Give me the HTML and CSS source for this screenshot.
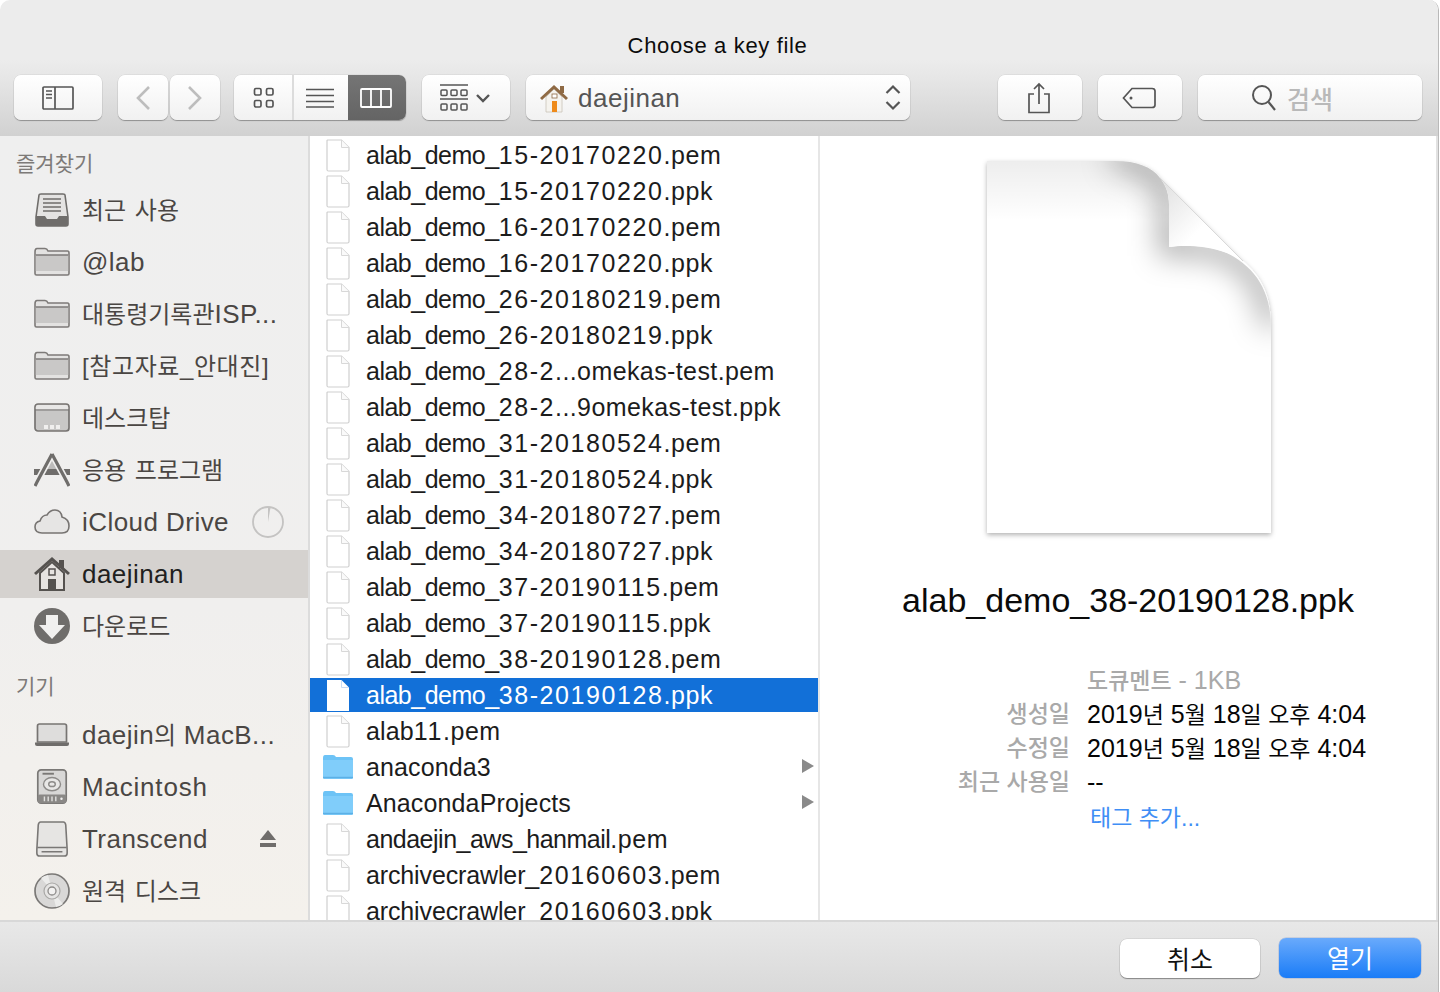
FILE: index.html
```html
<!DOCTYPE html>
<html lang="ko">
<head>
<meta charset="utf-8">
<title>Choose a key file</title>
<link rel="stylesheet" href="styles.css">
</head>
<body>
<svg class="sprite" xmlns="http://www.w3.org/2000/svg">
  <symbol id="doc" viewBox="0 0 24 33"><path d="M1.5 1H15.500L23 8.500V30.500Q23 32 21.500 32H2.500Q1 32 1 30.500V1.500Z" fill="#fff" stroke="#cfcfcf" stroke-width="1.200"/><path d="M15.500 1V8.500H23" fill="#fafafa" stroke="#d8d8d8" stroke-width="1"/></symbol>
  <symbol id="docw" viewBox="0 0 24 33"><path d="M1 1H15.500L23 8.500V32H1Z" fill="#fff"/><path d="M15.500 1V8.500H23" fill="none" stroke="#c9dcf5" stroke-width="1"/></symbol>
  <symbol id="bluefolder" viewBox="0 0 32 26"><path d="M1 4Q1 1 3 1H11Q13 1 14 3H29Q31 3 31 5V23Q31 25 29 25H3Q1 25 1 23Z" fill="#6dc3f6"/><path d="M1 6H31V23Q31 25 29 25H3Q1 25 1 23Z" fill="#80cdfa"/><path d="M1 23.500H31" stroke="#5cb0e6" stroke-width="1.500"/></symbol>
  <symbol id="sfolder" viewBox="0 0 36 30"><path d="M1 5Q1 1.500 3 1.500H11Q13 1.500 14 4H33.500Q35 4 35 6V26.500Q35 28 33.500 28H2.500Q1 28 1 26.500Z" fill="#e3e2e1" stroke="#7d7a78" stroke-width="1.600"/><path d="M1.800 8H34.200V24H1.800Z" fill="#c9c8c7"/><path d="M1.800 8H34.200" stroke="#7d7a78" stroke-width="1.400"/></symbol>
</svg>
<div class="window">
  <header class="titlebar"><span class="title">Choose a key file</span></header>
  <nav class="toolbar">
    <div class="btn b-side"><svg class="ic" width="32" height="24" viewBox="0 0 32 24"><rect x="1" y="1" width="30" height="22" rx="1" fill="none" stroke="#555" stroke-width="1.700"/><path d="M13 1V23M4 5H10M4 8.500H10M4 12H10" stroke="#555" stroke-width="1.700" fill="none"/></svg></div>
    <div class="navpair">
      <div class="btn b-nav"><svg class="ic" width="16" height="26" viewBox="0 0 16 26"><path d="M14 2L3 13L14 24" fill="none" stroke="#bdbdbd" stroke-width="2.600"/></svg></div>
      <div class="btn b-nav"><svg class="ic" width="16" height="26" viewBox="0 0 16 26"><path d="M2 2L13 13L2 24" fill="none" stroke="#bdbdbd" stroke-width="2.600"/></svg></div>
    </div>
    <div class="seg">
      <div class="seg-i s1"><svg class="ic" width="22" height="22" viewBox="0 0 22 22"><g fill="none" stroke="#555" stroke-width="1.700"><rect x="1.500" y="1.500" width="6.500" height="6.500" rx="1.500"/><rect x="13.500" y="1.500" width="6.500" height="6.500" rx="1.500"/><rect x="1.500" y="13.500" width="6.500" height="6.500" rx="1.500"/><rect x="13.500" y="13.500" width="6.500" height="6.500" rx="1.500"/></g></svg></div>
      <div class="seg-i s2"><svg class="ic" width="28" height="20" viewBox="0 0 28 20"><path d="M0 1.500H28M0 7.500H28M0 13.500H28M0 19H28" stroke="#555" stroke-width="1.600"/></svg></div>
      <div class="seg-i s3"><svg class="ic" width="32" height="20" viewBox="0 0 32 20"><rect x="1" y="1" width="30" height="18" rx="1" fill="none" stroke="#fff" stroke-width="1.800"/><path d="M11 1V19M21 1V19" stroke="#fff" stroke-width="1.800"/></svg></div>
    </div>
    <div class="btn b-arr">
      <svg class="ic" width="28" height="27" viewBox="0 0 28 27"><path d="M0 1H28M0 15H28" stroke="#555" stroke-width="1.600"/><g fill="none" stroke="#555" stroke-width="1.500"><rect x="1" y="6" width="6" height="5.500" rx="1"/><rect x="11" y="6" width="6" height="5.500" rx="1"/><rect x="21" y="6" width="6" height="5.500" rx="1"/><rect x="1" y="20" width="6" height="6" rx="1"/><rect x="11" y="20" width="6" height="6" rx="1"/><rect x="21" y="20" width="6" height="6" rx="1"/></g></svg>
      <svg class="ic" width="14" height="10" viewBox="0 0 14 10"><path d="M1 2L7 8L13 2" fill="none" stroke="#555" stroke-width="2.400"/></svg>
    </div>
    <div class="btn b-path">
      <svg class="ic" width="30" height="30" viewBox="0 0 30 30"><path d="M7 14V29H23V14L15 6Z" fill="#f5f3ee" stroke="#c9c3b8" stroke-width=".8"/><path d="M1 15L15 2L29 15L27 17L15 6L3 17Z" fill="#8f6a44"/><rect x="21" y="3" width="4" height="7" fill="#8f6a44"/><rect x="13" y="18" width="5" height="11" fill="#ee8a1a"/><rect x="13" y="11" width="5" height="4" fill="#fff" stroke="#8f6a44" stroke-width=".8"/></svg>
      <span class="path-label">daejinan</span>
      <svg class="ic" width="16" height="27" viewBox="0 0 16 27"><path d="M1.500 9L8 2.500L14.500 9M1.500 18L8 24.500L14.500 18" fill="none" stroke="#555" stroke-width="2.200"/></svg>
    </div>
    <div class="btn b-share"><svg class="ic" width="24" height="32" viewBox="0 0 24 32"><path d="M7 12H2V30.500H22V12H17" fill="none" stroke="#555" stroke-width="1.700"/><path d="M12 22V2M7 7L12 2L17 7" fill="none" stroke="#555" stroke-width="1.700"/></svg></div>
    <div class="btn b-tag"><svg class="ic" width="34" height="22" viewBox="0 0 34 22"><path d="M10 1.500H30Q33 1.500 33 4V18Q33 20.500 30 20.500H10L1.500 11Z" fill="none" stroke="#555" stroke-width="1.700"/><circle cx="9" cy="11" r="1.500" fill="#555"/></svg></div>
    <div class="btn b-search"><svg class="ic" width="26" height="28" viewBox="0 0 26 28"><circle cx="11" cy="11" r="9" fill="none" stroke="#555" stroke-width="2"/><path d="M17.500 18L24 26" stroke="#555" stroke-width="2.200"/></svg><span class="search-label">검색</span></div>
  </nav>
  <main class="main">
    <aside class="sidebar">
      <div class="side-head">즐겨찾기</div>
      <ul class="side-list">
        <li class="side-row"><svg class="si" viewBox="0 0 36 34"><path d="M5 2Q5 1 7 1H29Q31 1 31 2L34 24V31Q34 33 32 33H4Q2 33 2 31V24Z" fill="#e4e3e2" stroke="#6f6d6b" stroke-width="1.600"/><path d="M9 6H27M9 10H27M9 14H27M9 18H27" stroke="#6f6d6b" stroke-width="1.500"/><path d="M2 23H11L13 26H23L25 23H34V31Q34 33 32 33H4Q2 33 2 31Z" fill="#6f6d6b"/></svg><span class="lbl k up">최근 사용</span></li>
        <li class="side-row"><svg class="si"><use href="#sfolder"/></svg><span class="lbl">@lab</span></li>
        <li class="side-row"><svg class="si"><use href="#sfolder"/></svg><span class="lbl up"><span class="k">대통령기록관</span>ISP...</span></li>
        <li class="side-row"><svg class="si"><use href="#sfolder"/></svg><span class="lbl k up wide">[참고자료_안대진]</span></li>
        <li class="side-row"><svg class="si" viewBox="0 0 36 30"><rect x="1" y="1" width="34" height="27" rx="3" fill="#c8c7c6" stroke="#777472" stroke-width="1.700"/><path d="M1.800 6V4Q1.800 2 4 2H32Q34.200 2 34.200 4V6Z" fill="#e8e7e6"/><path d="M1 7H35" stroke="#777472" stroke-width="1.200"/><path d="M10 22H14V26H10ZM16 22H20V26H16ZM22 22H26V26H22Z" fill="#f0efee"/></svg><span class="lbl k up">데스크탑</span></li>
        <li class="side-row"><svg class="si" viewBox="0 0 36 34"><path d="M0 16H36V22H0Z" fill="#6f6d6b"/><path d="M12 16L18 7L24 16Z" fill="#bdbcbb"/><path d="M18 1L33 29M18 1L3 29" fill="none" stroke="#f0efee" stroke-width="6.500"/><path d="M18 1L33 29L35 33M18 1L3 29L1 33" fill="none" stroke="#6f6d6b" stroke-width="3.200"/></svg><span class="lbl k up">응용 프로그램</span></li>
        <li class="side-row"><svg class="si" viewBox="0 0 36 26"><path d="M8 24Q1 24 1 18Q1 13 6 12Q8 6 13 6Q16 1 21 1Q27 1 28 8Q35 10 35 17Q35 24 28 24Z" fill="#e6e5e4" stroke="#777472" stroke-width="1.600"/></svg><span class="lbl">iCloud Drive</span><svg class="side-badge" width="32" height="32" viewBox="0 0 32 32"><circle cx="16" cy="16" r="15" fill="none" stroke="#c4c3c2" stroke-width="1.800"/><path d="M16 1V16L18.500 1.500Z" fill="#c4c3c2"/></svg></li>
        <li class="side-row selected"><svg class="si" viewBox="0 0 36 34"><path d="M6 16V33H30V16L18 5Z" fill="#e6e3e0" stroke="#55524f" stroke-width="2"/><path d="M1 17L18 2L35 17" fill="none" stroke="#55524f" stroke-width="3"/><rect x="25" y="3" width="5" height="8" fill="#55524f"/><rect x="14" y="22" width="8" height="11" fill="#55524f"/><rect x="15" y="12" width="6" height="6" fill="none" stroke="#55524f" stroke-width="1.500"/></svg><span class="lbl">daejinan</span></li>
        <li class="side-row"><svg class="si" viewBox="0 0 36 36"><circle cx="18" cy="18" r="18" fill="#6f6d6b"/><path d="M12 7H24V17H31L18 31L5 17H12Z" fill="#f1f0ef"/></svg><span class="lbl k up">다운로드</span></li>
      </ul>
      <div class="side-head head2">기기</div>
      <ul class="side-list">
        <li class="side-row"><svg class="si" viewBox="0 0 36 24"><path d="M3.500 17V3Q3.500 1 5.500 1H30.500Q32.500 1 32.500 3V19H3.500Z" fill="#dedddc" stroke="#777472" stroke-width="1.700"/><path d="M1 19.500H35V21Q35 23 33 23H3Q1 23 1 21Z" fill="#6f6d6b"/></svg><span class="lbl up">daejin<span class="k">의</span> MacB...</span></li>
        <li class="side-row"><svg class="si" viewBox="0 0 36 38"><rect x="3" y="1" width="30" height="35" rx="3.500" fill="#d8d7d6" stroke="#7a7876" stroke-width="1.800"/><path d="M8 5H20" stroke="#7a7876" stroke-width="2"/><ellipse cx="18" cy="16" rx="9" ry="7" fill="#e8e7e6" stroke="#8d8b89" stroke-width="1.500"/><ellipse cx="18" cy="16" rx="3.500" ry="2.500" fill="none" stroke="#8d8b89" stroke-width="1.500"/><rect x="3" y="27" width="30" height="9" rx="2" fill="#8a8886"/><path d="M10 29V34M14 29V34M18 29V34M22 29V34" stroke="#e0dfde" stroke-width="1.500"/><circle cx="28" cy="31.500" r="1.300" fill="#f0efee"/></svg><span class="lbl mac">Macintosh</span></li>
        <li class="side-row"><svg class="si" viewBox="0 0 36 38"><path d="M6 1H30Q32 1 32.500 4L34 30V34Q34 37 31 37H5Q2 37 2 34V30L3.500 4Q4 1 6 1Z" fill="#e6e5e3" stroke="#7a7876" stroke-width="1.700"/><path d="M2.500 28H33.500M7 32.500H29" stroke="#7a7876" stroke-width="1.600"/></svg><span class="lbl">Transcend</span><svg class="side-badge eject" width="16" height="18" viewBox="0 0 16 18"><path d="M8 0L16 10H0Z" fill="#6f6d6b"/><rect y="13" width="16" height="4" fill="#6f6d6b"/></svg></li>
        <li class="side-row"><svg class="si" viewBox="0 0 36 36"><circle cx="18" cy="18" r="17" fill="#d9d8d7" stroke="#7a7876" stroke-width="1.700"/><path d="M18 18L7 5A17 17 0 0 1 14 2ZM18 18L29 31A17 17 0 0 1 22 34Z" fill="#ececeb"/><circle cx="18" cy="18" r="8" fill="#e6e5e4" stroke="#a9a8a6" stroke-width="1.200"/><circle cx="18" cy="18" r="4" fill="#f3f2f1" stroke="#8d8b89" stroke-width="1.300"/></svg><span class="lbl k up">원격 디스크</span></li>
      </ul>
    </aside>
    <section class="files">
      <div class="f"><svg class="fi"><use href="#doc"/></svg><span><b class="a">alab_demo_</b><b class="n">15-20170220</b>.pem</span></div>
      <div class="f"><svg class="fi"><use href="#doc"/></svg><span><b class="a">alab_demo_</b><b class="n">15-20170220</b>.ppk</span></div>
      <div class="f"><svg class="fi"><use href="#doc"/></svg><span><b class="a">alab_demo_</b><b class="n">16-20170220</b>.pem</span></div>
      <div class="f"><svg class="fi"><use href="#doc"/></svg><span><b class="a">alab_demo_</b><b class="n">16-20170220</b>.ppk</span></div>
      <div class="f"><svg class="fi"><use href="#doc"/></svg><span><b class="a">alab_demo_</b><b class="n">26-20180219</b>.pem</span></div>
      <div class="f"><svg class="fi"><use href="#doc"/></svg><span><b class="a">alab_demo_</b><b class="n">26-20180219</b>.ppk</span></div>
      <div class="f"><svg class="fi"><use href="#doc"/></svg><span><b class="a">alab_demo_</b><b class="n">28-2</b><b class="e">...omekas-test.pem</b></span></div>
      <div class="f"><svg class="fi"><use href="#doc"/></svg><span><b class="a">alab_demo_</b><b class="n">28-2</b><b class="e">...9omekas-test.ppk</b></span></div>
      <div class="f"><svg class="fi"><use href="#doc"/></svg><span><b class="a">alab_demo_</b><b class="n">31-20180524</b>.pem</span></div>
      <div class="f"><svg class="fi"><use href="#doc"/></svg><span><b class="a">alab_demo_</b><b class="n">31-20180524</b>.ppk</span></div>
      <div class="f"><svg class="fi"><use href="#doc"/></svg><span><b class="a">alab_demo_</b><b class="n">34-20180727</b>.pem</span></div>
      <div class="f"><svg class="fi"><use href="#doc"/></svg><span><b class="a">alab_demo_</b><b class="n">34-20180727</b>.ppk</span></div>
      <div class="f"><svg class="fi"><use href="#doc"/></svg><span><b class="a">alab_demo_</b><b class="n">37-20190115</b>.pem</span></div>
      <div class="f"><svg class="fi"><use href="#doc"/></svg><span><b class="a">alab_demo_</b><b class="n">37-20190115</b>.ppk</span></div>
      <div class="f"><svg class="fi"><use href="#doc"/></svg><span><b class="a">alab_demo_</b><b class="n">38-20190128</b>.pem</span></div>
      <div class="f sel"><svg class="fi"><use href="#docw"/></svg><span><b class="a">alab_demo_</b><b class="n">38-20190128</b>.ppk</span></div>
      <div class="f"><svg class="fi"><use href="#doc"/></svg><span><b class="t">alab</b><b class="n">11</b>.pem</span></div>
      <div class="f"><svg class="fo"><use href="#bluefolder"/></svg><span class="t">anaconda3</span><i class="arrow"></i></div>
      <div class="f"><svg class="fo"><use href="#bluefolder"/></svg><span class="t">AnacondaProjects</span><i class="arrow"></i></div>
      <div class="f"><svg class="fi"><use href="#doc"/></svg><span><b class="a">andaejin_aws_hanmail</b>.pem</span></div>
      <div class="f"><svg class="fi"><use href="#doc"/></svg><span><b class="z">archivecrawler_</b><b class="n">20160603</b>.pem</span></div>
      <div class="f"><svg class="fi"><use href="#doc"/></svg><span><b class="z">archivecrawler_</b><b class="n">20160603</b>.ppk</span></div>
    </section>
    <section class="preview">
      <svg class="bigdoc" width="304" height="392" viewBox="-10 -10 304 392">
        <defs>
          <filter id="sh" x="-10%" y="-10%" width="120%" height="120%"><feDropShadow dx="0" dy="2" stdDeviation="2.500" flood-color="#000" flood-opacity=".3"/></filter>
          <filter id="soft" filterUnits="userSpaceOnUse" x="-60" y="-60" width="420" height="360"><feGaussianBlur stdDeviation="15"/></filter>
          <linearGradient id="topg" x1="0" y1="0" x2="0" y2="1"><stop offset="0" stop-color="#000" stop-opacity=".07"/><stop offset="1" stop-color="#000" stop-opacity="0"/></linearGradient>
          <linearGradient id="foldg" x1="0" y1="0" x2="1" y2="1"><stop offset="0" stop-color="#dedede"/><stop offset=".55" stop-color="#fff"/></linearGradient>
          <clipPath id="pagec"><path d="M0 0H128C150 0 165 6 173 17C179 24 182 33 182 44V86C194 84 220 84 240 92C268 106 284 130 284 165V372H0Z"/></clipPath>
        </defs>
        <path filter="url(#sh)" d="M0 0H128C150 0 165 6 173 17L256 100C275 116 284 135 284 165V372H0Z" fill="#fff"/>
        <g clip-path="url(#pagec)">
          <rect x="0" y="0" width="284" height="60" fill="url(#topg)"/>
          <path filter="url(#soft)" d="M125 -4C150 0 165 6 173 17C179 24 182 33 182 44V86C194 84 220 84 240 92C268 106 284 130 284 165" fill="none" stroke="#000" stroke-opacity=".42" stroke-width="16"/>
        </g>
        <path d="M173 17C179 24 182 33 182 44V86C200 83 225 85 240 92C247 95 252 97 256 100Z" fill="url(#foldg)"/>
        <path d="M173 17L256 100" stroke="#d9d9d9" stroke-width="1" fill="none"/>
      </svg>
      <h1 class="pv-name">alab_demo_38-20190128.ppk</h1>
      <dl class="meta">
        <dt></dt><dd class="kind"><span class="mk">도큐멘트</span> - 1KB</dd>
        <dt class="mk">생성일</dt><dd>2019<span class="mk">년</span> 5<span class="mk">월</span> 18<span class="mk">일 오후</span> 4:04</dd>
        <dt class="mk">수정일</dt><dd>2019<span class="mk">년</span> 5<span class="mk">월</span> 18<span class="mk">일 오후</span> 4:04</dd>
        <dt class="mk">최근 사용일</dt><dd>--</dd>
        <dt></dt><dd class="tag mk">태그 추가...</dd>
      </dl>
    </section>
  </main>
  <footer class="bottom">
    <div class="act cancel">취소</div>
    <div class="act open">열기</div>
  </footer>
</div>
</body>
</html>
```
FILE: styles.css
```css
* { box-sizing: border-box; }
html, body { margin: 0; padding: 0; background: #fff; }
body { width: 1440px; height: 992px; overflow: hidden; font-family: "Liberation Sans", "Noto Sans CJK KR", sans-serif; }
ul, dl, dd, dt, h1 { margin: 0; padding: 0; list-style: none; }
b { font-weight: 400; }
.sprite { display: none; }
.ic { display: block; flex: none; }

.window { width: 1439px; height: 992px; display: flex; flex-direction: column; border-right: 1px solid #b9b9b9; border-top-left-radius: 10px; border-top-right-radius: 10px; overflow: hidden; }

.titlebar { height: 60px; background: #ececec; display: flex; justify-content: center; padding-top: 32px; padding-right: 3px; }
.title { font-size: 22px; line-height: 28px; letter-spacing: .65px; color: #0c0c0c; }

.toolbar { height: 76px; padding: 15px 0 0 14px; display: flex; align-items: flex-start; background: linear-gradient(#ececec, #e6e6e6 25%, #d1d1d1); }
.btn { height: 45px; display: flex; align-items: center; justify-content: center; background: linear-gradient(#fff, #f1f1f1); border-radius: 7px; box-shadow: 0 1px 1px rgba(0,0,0,.3), 0 0 0 .5px rgba(0,0,0,.08); }
.b-side { width: 88px; }
.navpair { display: flex; gap: 2px; margin-left: 16px; }
.b-nav { width: 50px; }
.seg { margin-left: 14px; width: 172px; height: 45px; display: flex; border-radius: 7px; overflow: hidden; background: linear-gradient(#fff, #f1f1f1); box-shadow: 0 1px 1px rgba(0,0,0,.3), 0 0 0 .5px rgba(0,0,0,.08); }
.seg-i { display: flex; align-items: center; justify-content: center; }
.s1 { width: 60px; border-right: 2px solid #dcdcdc; padding-left: 2px; }
.s2 { width: 54px; padding-right: 2px; }
.s3 { width: 58px; background: linear-gradient(#757575, #646464); padding-right: 2px; }
.b-arr { width: 88px; margin-left: 16px; gap: 8px; padding-right: 2px; }
.b-path { width: 384px; margin-left: 16px; justify-content: flex-start; padding: 0 9px 0 13px; }
.path-label { font-size: 26px; letter-spacing: .5px; color: #555; margin-left: 9px; flex: 1; padding-top: 2px; }
.b-share { width: 84px; margin-left: 88px; padding-right: 2px; }
.b-tag { width: 84px; margin-left: 16px; padding-right: 2px; }
.b-search { width: 224px; margin-left: 16px; gap: 10px; padding-right: 36px; }
.search-label { font-size: 25px; color: #b9b9b9; font-weight: 500; }

.main { height: 784px; display: flex; }

.sidebar { width: 310px; flex: none; border-right: 2px solid #dcdcdc; background: linear-gradient(#efefef, #f0efee 60%, #f4f1ec); padding-top: 12px; overflow: hidden; }
.side-head { font-size: 21px; line-height: 32px; color: #7d7a78; padding-left: 16px; margin-bottom: 6px; }
.head2 { margin-top: 21px; margin-bottom: 8px; }
.side-list { display: flex; flex-direction: column; gap: 4px; }
.side-row { height: 48px; display: flex; align-items: center; padding-left: 34px; color: #4a4643; font-size: 26px; letter-spacing: .45px; }
.side-row.selected { background: #d5d2cf; color: #211f1e; }
.si { width: 36px; height: 36px; flex: none; }
.lbl { margin-left: 12px; white-space: nowrap; }
.mac { letter-spacing: .8px; }
.k { font-size: 24px; letter-spacing: 0; word-spacing: 2px; }
.up { padding-bottom: 4px; }
.wide { letter-spacing: .6px; }
.side-badge { margin-left: 23px; flex: none; }
.eject { margin-left: 52px; }

.files { width: 510px; flex: none; border-right: 2px solid #e6e6e6; background: #fff; padding-top: 2px; display: flex; flex-direction: column; gap: 2px; overflow: hidden; }
.f { height: 34px; flex: none; display: flex; align-items: center; font-size: 25px; letter-spacing: .54px; color: #1c1c1c; padding-left: 16px; white-space: nowrap; }
.fi { width: 24px; height: 33px; flex: none; margin-right: 16px; }
.fo { width: 32px; height: 26px; flex: none; margin-left: -4px; margin-right: 12px; }
.a { letter-spacing: -.5px; }
.n { letter-spacing: 1.6px; }
.e { letter-spacing: .4px; }
.z { letter-spacing: -.13px; }
.t { letter-spacing: .13px; }
.f.sel { background: #1270d8; color: #fff; }
.arrow { margin-left: auto; margin-right: 4px; width: 0; height: 0; border-left: 12px solid #8a8a8a; border-top: 7px solid transparent; border-bottom: 7px solid transparent; transform: translateY(-1px); }

.preview { flex: 1; background: #fff; border-right: 2px solid #e2e2e2; display: flex; flex-direction: column; align-items: center; padding-top: 15px; }
.bigdoc { display: block; flex: none; margin-left: 2px; }
.pv-name { font-size: 34px; line-height: 44px; font-weight: 400; color: #0a0a0a; margin-top: 35px; }
.meta { display: grid; grid-template-columns: 250px 1fr; grid-auto-rows: 34px; column-gap: 17px; width: 100%; font-size: 25px; line-height: 34px; margin-top: 41px; }
.meta dt { text-align: right; color: #a9a9a9; }
.meta dd { color: #050505; white-space: nowrap; }
.meta .kind { color: #a9a9a9; font-weight: 500; }
.mk { font-size: 23px; }
.meta dt.mk { font-weight: 500; }
.meta .tag { color: #3f8ef5; padding-left: 3px; padding-top: 2px; }

.bottom { height: 72px; flex: none; border-top: 2px solid #d8d8d8; background: linear-gradient(#e8e8e8, #d9d9d9); display: flex; justify-content: flex-end; align-items: flex-start; gap: 19px; padding: 16px 17px 0 0; }
.act { height: 40px; border-radius: 7px; display: flex; align-items: center; justify-content: center; font-size: 25px; padding-bottom: 2px; }
.cancel { width: 140px; background: #fff; color: #111; box-shadow: 0 1px 1px rgba(0,0,0,.35), 0 0 0 .5px rgba(0,0,0,.12); margin-top: 1px; height: 39px; }
.open { width: 142px; background: linear-gradient(#69aafc, #1a7cf7); color: #fff; box-shadow: 0 0 0 .5px rgba(0,60,180,.25); }
```
